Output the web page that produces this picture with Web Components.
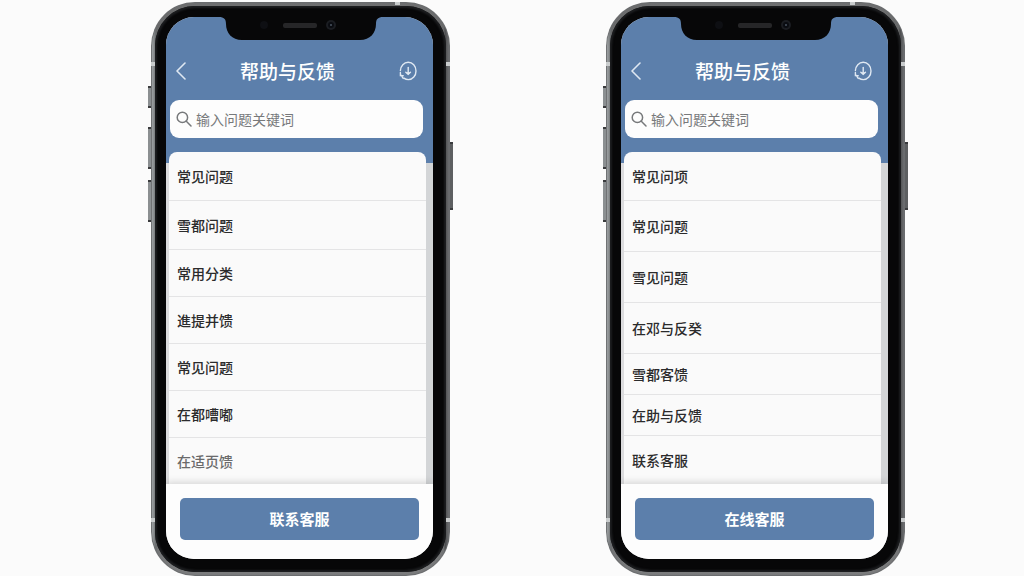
<!DOCTYPE html>
<html lang="zh-CN">
<head>
<meta charset="utf-8">
<meta name="viewport" content="width=device-width, initial-scale=1">
<title>帮助与反馈</title>
<style>
  body {
    margin: 0;
    background: #fbfbfb;
    font-family: "Noto Sans CJK SC", sans-serif;
  }
</style>
</head>
<body>
<phone-stage>
  <phone-frame>
    <help-screen heading="帮助与反馈" hint="输入问题关键词" action="联系客服">
      <help-row size="roomy">常见问题</help-row>
      <help-row size="roomy">雪都问题</help-row>
      <help-row>常用分类</help-row>
      <help-row>進提并馈</help-row>
      <help-row>常见问题</help-row>
      <help-row>在都嘈嘟</help-row>
      <help-row muted>在适页馈</help-row>
    </help-screen>
  </phone-frame>
  <phone-frame>
    <help-screen heading="帮助与反馈" hint="输入问题关键词" action="在线客服">
      <help-row size="roomy">常见问项</help-row>
      <help-row size="large">常见问题</help-row>
      <help-row size="large">雪见问题</help-row>
      <help-row size="large">在邓与反癸</help-row>
      <help-row size="tight">雪都客馈</help-row>
      <help-row size="tight">在助与反馈</help-row>
      <help-row>联系客服</help-row>
    </help-screen>
  </phone-frame>
</phone-stage>

<script>
class PhoneStage extends HTMLElement {
  connectedCallback() {
    this.attachShadow({ mode: "open" }).innerHTML = `
      <style>
        :host {
          display: grid;
          grid-template-columns: 1fr 1fr;
          gap: 156px;
          padding: 2px 119px 0 151px;
        }
      </style>
      <slot></slot>
    `;
  }
}

class PhoneFrame extends HTMLElement {
  connectedCallback() {
    this.attachShadow({ mode: "open" }).innerHTML = `
      <style>
        :host {
          display: flex;
          position: relative;
          box-sizing: border-box;
          padding: 4px;
          border-radius: 44px;
          background:
            linear-gradient(90deg, #b4b8b9 0, #66696b 5px, transparent 6px, transparent calc(100% - 6px), #4a4b4d calc(100% - 5px), #77797b 100%),
            linear-gradient(#6e6f70, #4c4d4f 30%, #4c4d4f 70%, #7c7d7e);
          box-shadow: inset 0 0 1px 1px #6a6c6e;
        }
        .bezel {
          flex: 1;
          display: flex;
          min-width: 0;
          padding: 11px 13px 13px 11px;
          border-radius: 40px;
          background: #070708;
          box-shadow: inset 0 0 2px 2px #1d1e20;
        }
        .glass {
          flex: 1;
          display: flex;
          min-width: 0;
          overflow: hidden;
          border-radius: 28px;
        }
        .notch {
          position: absolute;
          top: 14px;
          left: 50%;
          margin-left: -82px;
        }
        .key {
          position: absolute;
          width: 3px;
          background: #8b8f91;
          border-block: 2px solid #3a3b3d;
          box-sizing: border-box;
        }
        .mute { left: -3px; top: 84px; height: 22px; }
        .up { left: -3px; top: 125px; height: 42px; }
        .down { left: -3px; top: 178px; height: 42px; }
        .power { right: -3px; top: 140px; height: 68px; background: #5d5f61; }
        .band {
          position: absolute;
          background: #c9cccd;
        }
        .band.left { left: 0; width: 4px; height: 4px; top: 60px; }
        .band.right { right: 0; width: 4px; height: 4px; top: 60px; }
        .band.low-left { left: 0; width: 4px; height: 4px; bottom: 54px; }
        .band.low-right { right: 0; width: 4px; height: 4px; bottom: 54px; }
        .band.top { right: 50px; width: 5px; height: 3px; top: 0; }
      </style>
      <span class="key mute"></span>
      <span class="key up"></span>
      <span class="key down"></span>
      <span class="key power"></span>
      <div class="bezel"><div class="glass"><slot></slot></div></div>
      <svg class="notch" width="164" height="26" viewBox="0 0 164 26" aria-hidden="true">
        <path d="M0 0H164V1C159 1 157 3 157 8C157 17 151 24 141 24H23C13 24 7 17 7 8C7 3 5 1 0 1Z" fill="#070708"/>
        <rect x="64" y="7" width="34" height="5" rx="2" fill="#262628"/>
        <circle cx="45" cy="9" r="4" fill="#0e0f13"/>
        <circle cx="112" cy="9" r="5" fill="#1b1d22"/>
        <circle cx="112" cy="9" r="3" fill="#0a0c11"/>
        <circle cx="112" cy="9" r="1" fill="#4a5360"/>
      </svg>
      <span class="band left"></span>
      <span class="band right"></span>
      <span class="band low-left"></span>
      <span class="band low-right"></span>
      <span class="band top"></span>
    `;
  }
}

class HelpScreen extends HTMLElement {
  connectedCallback() {
    const heading = this.getAttribute("heading");
    const hint = this.getAttribute("hint");
    const action = this.getAttribute("action");
    this.attachShadow({ mode: "open" }).innerHTML = `
      <style>
        :host {
          --blue: #5c7fab;
          flex: 1;
          display: flex;
          flex-direction: column;
          min-width: 0;
          background: linear-gradient(var(--blue) 146px, transparent 146px),
            linear-gradient(90deg, #dcdcde 50%, #d3d5d7 50%);
        }
        button, input {
          font: inherit;
          border: 0;
          margin: 0;
          padding: 0;
          background: none;
        }
        header {
          display: grid;
          grid-template-columns: 10px 1fr 28px;
          align-items: center;
          padding: 38px 16px 13px 10px;
          color: #fff;
        }
        h1 {
          margin: 0;
          font-size: 19px;
          line-height: 32px;
          font-weight: 500;
          text-align: center;
        }
        header button {
          display: flex;
          justify-content: flex-end;
          color: #dfe8f2;
        }
        .search {
          display: flex;
          align-items: center;
          gap: 4px;
          height: 38px;
          margin: 0 10px 14px 4px;
          padding: 0 6px;
          border-radius: 9px;
          background: #fdfdfd;
          color: #77797b;
        }
        input {
          flex: 1;
          min-width: 0;
          font-size: 14px;
          line-height: 20px;
          color: #333;
          outline: 0;
        }
        input::placeholder {
          color: #77797b;
          opacity: 1;
        }
        .list {
          flex: 1;
          display: flex;
          flex-direction: column;
          margin: 0 7px 0 3px;
          border-radius: 8px 8px 0 0;
          background: #fafafa;
          overflow: hidden;
        }
        footer {
          position: relative;
          padding: 14px 14px 19px;
          background: #fdfdfd;
          box-shadow: 0 -2px 7px rgba(0, 0, 0, 0.14);
        }
        footer button {
          display: block;
          width: 100%;
          padding-bottom: 2px;
          height: 42px;
          border-radius: 5px;
          background: var(--blue);
          color: #fff;
          font-size: 15px;
          font-weight: 700;
        }
      </style>
      <header>
        <button type="button" aria-label="返回">
          <svg width="10" height="18" viewBox="0 0 10 18" fill="none" stroke="currentColor" stroke-width="1.6" stroke-linecap="round" stroke-linejoin="round"><path d="M9 1 1 9l8 8"/></svg>
        </button>
        <h1>${heading}</h1>
        <button type="button" aria-label="历史记录">
          <svg width="18" height="20" viewBox="0 0 18 20" fill="none" stroke="currentColor" stroke-width="1.4" stroke-linecap="round"><path d="M1.400 9.500C1.600 4.900 5 1.300 9.200 1.300c4.400 0 7.800 3.800 7.800 8.600s-3.300 8.700-7.600 8.700c-1.700 0-3.200-.5-4.500-1.500"/><path d="M1.400 11.500v3l2.800.2M2.200 14.300l2 3.200"/><path d="M9.200 6.500v6.200"/><path d="m6.800 11.300 2.400 2 2.300-2" fill="currentColor"/></svg>
        </button>
      </header>
      <label class="search">
        <svg width="16" height="16" viewBox="0 0 16 16" fill="none" stroke="currentColor" stroke-width="1.5" stroke-linecap="round"><circle cx="6.4" cy="6.4" r="5.2"/><path d="m10.3 10.3 4.7 4.7"/></svg>
        <input type="text" placeholder="${hint}" aria-label="${hint}">
      </label>
      <div class="list" role="list"><slot></slot></div>
      <footer><button type="button">${action}</button></footer>
    `;
  }
}

class HelpRow extends HTMLElement {
  connectedCallback() {
    this.setAttribute("role", "listitem");
    this.attachShadow({ mode: "open" }).innerHTML = `
      <style>
        :host {
          display: flex;
          box-sizing: border-box;
          min-height: 47px;
          border-bottom: 1px solid #e4e4e5;
          color: #2b2b2c;
        }
        :host([size="tight"]) { min-height: 41px; }
        :host([size="roomy"]) { min-height: 49px; }
        :host([size="large"]) { min-height: 51px; }
        :host([muted]) { color: #6a6a6b; }
        :host(:last-child) {
          flex: 1;
          min-height: 46px;
          border-bottom: 0;
        }
        a {
          flex: 1;
          display: flex;
          align-items: center;
          padding: 0 8px;
          color: inherit;
          text-decoration: none;
          font-size: 14px;
          line-height: 20px;
          font-weight: 500;
        }
      </style>
      <a href="#"><slot></slot></a>
    `;
  }
}

customElements.define("phone-stage", PhoneStage);
customElements.define("phone-frame", PhoneFrame);
customElements.define("help-screen", HelpScreen);
customElements.define("help-row", HelpRow);
</script>
</body>
</html>
